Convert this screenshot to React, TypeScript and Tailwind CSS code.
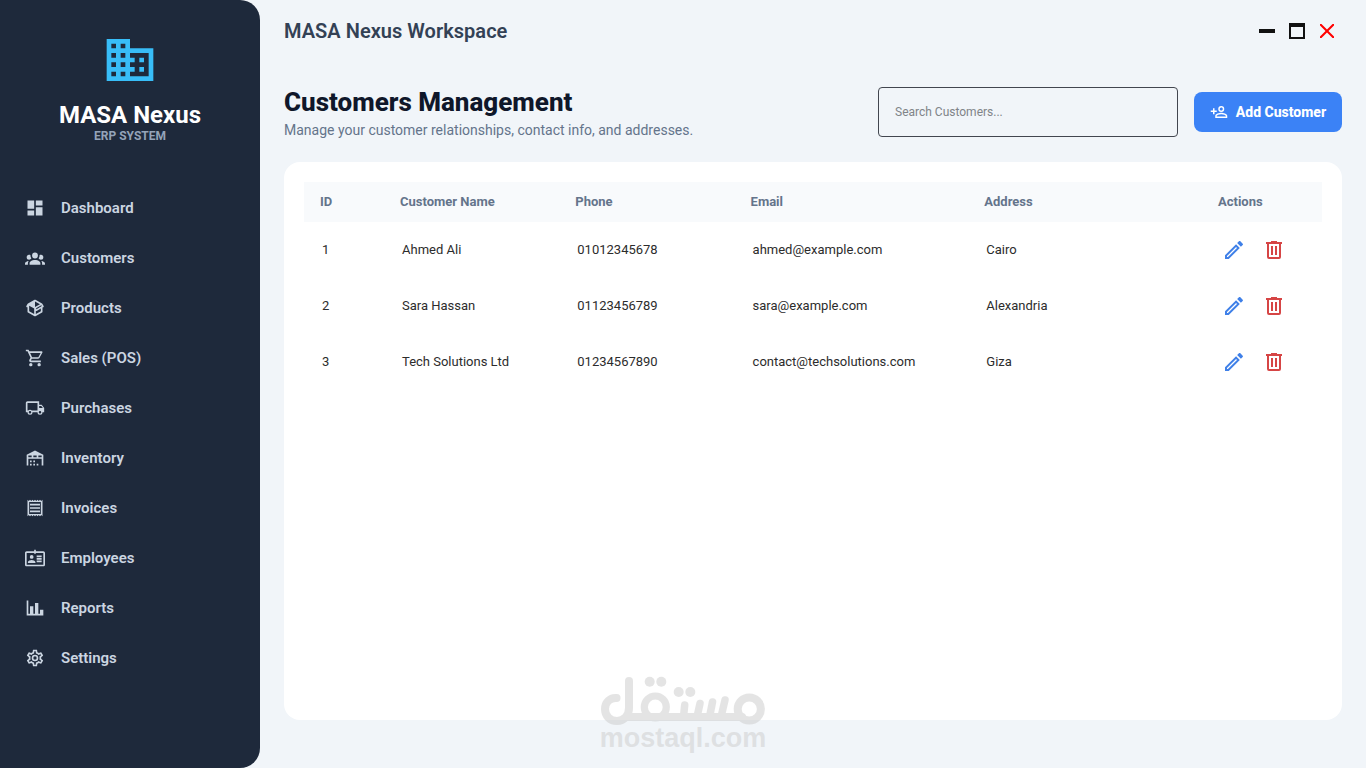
import React from 'react';

const icons = {
  domain: 'M18,15H16V17H18M18,11H16V13H18M20,19H12V17H14V15H12V13H14V11H12V9H20M10,7H8V5H10M10,11H8V9H10M10,15H8V13H10M10,19H8V17H10M6,7H4V5H6M6,11H4V9H6M6,15H4V13H6M6,19H4V17H6M12,7V3H2V21H22V7H12Z',
  dashboard: 'M13,3V9H21V3M13,21H21V11H13M3,21H11V15H3M3,13H11V3H3V13Z',
  group: 'M12,5.5A3.5,3.5 0 0,1 15.5,9A3.5,3.5 0 0,1 12,12.5A3.5,3.5 0 0,1 8.5,9A3.5,3.5 0 0,1 12,5.5M5,8C5.56,8 6.08,8.15 6.53,8.42C6.38,9.85 6.8,11.27 7.66,12.38C7.16,13.34 6.16,14 5,14A3,3 0 0,1 2,11A3,3 0 0,1 5,8M19,8A3,3 0 0,1 22,11A3,3 0 0,1 19,14C17.84,14 16.84,13.34 16.34,12.38C17.2,11.27 17.62,9.85 17.47,8.42C17.92,8.15 18.44,8 19,8M5.5,18.25C5.5,16.18 8.41,14.5 12,14.5C15.59,14.5 18.5,16.18 18.5,18.25V20H5.5V18.25M0,20V18.5C0,17.11 1.89,15.94 4.45,15.6C3.86,16.28 3.5,17.22 3.5,18.25V20H0M24,20H20.5V18.25C20.5,17.22 20.14,16.28 19.55,15.6C22.11,15.94 24,17.11 24,18.5V20Z',
  box: 'M2,10.96C1.5,10.68 1.35,10.07 1.63,9.59L3.13,7C3.24,6.8 3.41,6.66 3.6,6.58L11.43,2.18C11.59,2.06 11.79,2 12,2C12.21,2 12.41,2.06 12.57,2.18L20.47,6.62C20.66,6.72 20.82,6.88 20.91,7.08L22.36,9.6C22.64,10.08 22.47,10.69 22,10.96L21,11.54V16.5C21,16.88 20.79,17.21 20.47,17.38L12.57,21.82C12.41,21.94 12.21,22 12,22C11.79,22 11.59,21.94 11.43,21.82L3.53,17.38C3.21,17.21 3,16.88 3,16.5V10.96C2.7,11.13 2.32,11.14 2,10.96M12,4.15V4.15L12,10.85V10.85L17.96,7.5L12,4.15M5,15.91L11,19.29V12.58L5,9.21V15.91M19,15.91V12.69L14,15.59C13.67,15.77 13.3,15.76 13,15.6V19.29L19,15.91M13.85,13.36L20.13,9.73L19.55,8.72L13.27,12.35L13.85,13.36Z',
  cart: 'M17,18A2,2 0 0,1 19,20A2,2 0 0,1 17,22C15.89,22 15,21.1 15,20C15,18.89 15.89,18 17,18M1,2H4.27L5.21,4H20A1,1 0 0,1 21,5C21,5.17 20.95,5.34 20.88,5.5L17.3,11.97C16.96,12.58 16.3,13 15.55,13H8.1L7.2,14.63L7.17,14.75A0.25,0.25 0 0,0 7.42,15H19V17H7C5.89,17 5,16.1 5,15C5,14.65 5.09,14.32 5.24,14.04L6.6,11.59L3,4H1V2M7,18A2,2 0 0,1 9,20A2,2 0 0,1 7,22C5.89,22 5,21.1 5,20C5,18.89 5.89,18 7,18M16,11L18.78,6H6.14L8.5,11H16Z',
  truck: 'M18,18.5A1.5,1.5 0 0,0 19.5,17A1.5,1.5 0 0,0 18,15.5A1.5,1.5 0 0,0 16.5,17A1.5,1.5 0 0,0 18,18.5M19.5,9.5H17V12H21.46L19.5,9.5M6,18.5A1.5,1.5 0 0,0 7.5,17A1.5,1.5 0 0,0 6,15.5A1.5,1.5 0 0,0 4.5,17A1.5,1.5 0 0,0 6,18.5M20,8L23,12V17H21A3,3 0 0,1 18,20A3,3 0 0,1 15,17H9A3,3 0 0,1 6,20A3,3 0 0,1 3,17H1V6C1,4.89 1.89,4 3,4H17V8H20M3,6V15H3.76C4.31,14.39 5.11,14 6,14C6.89,14 7.69,14.39 8.24,15H15V6H3Z',
  warehouse: 'M6 19H8V21H6V19M12 3L2 8V21H4V13H20V21H22V8L12 3M8 11H4V9H8V11M14 11H10V9H14V11M20 11H16V9H20V11M6 15H8V17H6V15M10 15H12V17H10V15M10 19H12V21H10V19M14 19H16V21H14V19Z',
  receipt: 'M19.5 3.5L18 2l-1.5 1.5L15 2l-1.5 1.5L12 2l-1.5 1.5L9 2 7.5 3.5 6 2 4.5 3.5 3 2v20l1.5-1.5L6 22l1.5-1.5L9 22l1.5-1.5L12 22l1.5-1.5L15 22l1.5-1.5L18 22l1.5-1.5L21 22V2l-1.5 1.5zM19 19.09H5V4.91h14v14.18zM6 15h12v2H6zm0-4h12v2H6zm0-4h12v2H6z',
  badge: 'M22,4H13V2H11V4H2C0.9,4 0,4.9 0,6V20C0,21.1 0.9,22 2,22H22C23.1,22 24,21.1 24,20V6C24,4.9 23.1,4 22,4M22,20H2V6H11V7H13V6H22V20M14,9H20V11H14V9M14,12H20V14H14V12M14,15H20V17H14V15M8,13A2.25,2.25 0 0,0 10.25,10.75A2.25,2.25 0 0,0 8,8.5A2.25,2.25 0 0,0 5.75,10.75A2.25,2.25 0 0,0 8,13M12.5,16.9V18H3.5V16.9C3.5,15.4 6.5,14.4 8,14.4C9.5,14.4 12.5,15.4 12.5,16.9Z',
  chart: 'M22,21H2V3H4V19H6V10H10V19H12V6H16V19H18V14H22V21Z',
  cog: 'M12,8A4,4 0 0,1 16,12A4,4 0 0,1 12,16A4,4 0 0,1 8,12A4,4 0 0,1 12,8M12,10A2,2 0 0,0 10,12A2,2 0 0,0 12,14A2,2 0 0,0 14,12A2,2 0 0,0 12,10M10,22C9.75,22 9.54,21.82 9.5,21.58L9.13,18.93C8.5,18.68 7.96,18.34 7.44,17.94L4.95,18.95C4.73,19.03 4.46,18.95 4.34,18.73L2.34,15.27C2.21,15.05 2.27,14.78 2.46,14.63L4.57,12.97L4.5,12L4.57,11L2.46,9.37C2.27,9.22 2.21,8.95 2.34,8.73L4.34,5.27C4.46,5.05 4.73,4.96 4.95,5.05L7.44,6.05C7.96,5.66 8.5,5.32 9.13,5.07L9.5,2.42C9.54,2.18 9.75,2 10,2H14C14.25,2 14.46,2.18 14.5,2.42L14.87,5.07C15.5,5.32 16.04,5.66 16.56,6.05L19.05,5.05C19.27,4.96 19.54,5.05 19.66,5.27L21.66,8.73C21.79,8.95 21.73,9.22 21.54,9.37L19.43,11L19.5,12L19.43,13L21.54,14.63C21.73,14.78 21.79,15.05 21.66,15.27L19.66,18.73C19.54,18.95 19.27,19.04 19.05,18.95L16.56,17.95C16.04,18.34 15.5,18.68 14.87,18.93L14.5,21.58C14.46,21.82 14.25,22 14,22H10M11.25,4L10.88,6.61C9.68,6.86 8.62,7.5 7.85,8.39L5.44,7.35L4.69,8.65L6.8,10.2C6.4,11.37 6.4,12.64 6.8,13.8L4.68,15.36L5.43,16.66L7.86,15.62C8.63,16.5 9.68,17.14 10.87,17.38L11.24,20H12.76L13.13,17.39C14.32,17.14 15.37,16.5 16.14,15.62L18.57,16.66L19.32,15.36L17.2,13.81C17.6,12.64 17.6,11.37 17.2,10.2L19.31,8.65L18.56,7.35L16.15,8.39C15.38,7.5 14.32,6.86 13.12,6.62L12.75,4H11.25Z',
  addUser: 'M15,4A4,4 0 0,0 11,8A4,4 0 0,0 15,12A4,4 0 0,0 19,8A4,4 0 0,0 15,4M15,5.9C16.16,5.9 17.1,6.84 17.1,8C17.1,9.16 16.16,10.1 15,10.1A2.1,2.1 0 0,1 12.9,8A2.1,2.1 0 0,1 15,5.9M4,7V10H1V12H4V15H6V12H9V10H6V7H4M15,13C12.33,13 7,14.33 7,17V20H23V17C23,14.33 17.67,13 15,13M15,14.9C17.97,14.9 21.1,16.36 21.1,17V18.1H8.9V17C8.9,16.36 12,14.9 15,14.9Z',
  pencil: 'M14.06,9L15,9.94L5.92,19H5V18.08L14.06,9M17.66,3C17.41,3 17.15,3.1 16.96,3.29L15.13,5.12L18.88,8.87L20.71,7.04C21.1,6.65 21.1,6 20.71,5.63L18.37,3.29C18.17,3.09 17.92,3 17.66,3M14.06,6.19L3,17.25V21H6.75L17.81,9.94L14.06,6.19Z',
  trash: 'M9,3V4H4V6H5V19A2,2 0 0,0 7,21H17A2,2 0 0,0 19,19V6H20V4H15V3H9M7,6H17V19H7V6M9,8V17H11V8H9M13,8V17H15V8H13Z',
  minimize: 'M20,14H4V10H20',
  maximize: 'M4,4H20V20H4V4M6,8V18H18V8H6Z',
  close: 'M13.46,12L19,17.54V19H17.54L12,13.46L6.46,19H5V17.54L10.54,12L5,6.46V5H6.46L12,10.54L17.54,5H19V6.46L13.46,12Z',
};

type IconName = keyof typeof icons;

function Icon({ name, className }: { name: IconName; className: string }) {
  return (
    <svg viewBox="0 0 24 24" fill="currentColor" className={`shrink-0 ${className}`} aria-hidden="true">
      <path d={icons[name]} />
    </svg>
  );
}

const navItems: { label: string; icon: IconName }[] = [
  { label: 'Dashboard', icon: 'dashboard' },
  { label: 'Customers', icon: 'group' },
  { label: 'Products', icon: 'box' },
  { label: 'Sales (POS)', icon: 'cart' },
  { label: 'Purchases', icon: 'truck' },
  { label: 'Inventory', icon: 'warehouse' },
  { label: 'Invoices', icon: 'receipt' },
  { label: 'Employees', icon: 'badge' },
  { label: 'Reports', icon: 'chart' },
  { label: 'Settings', icon: 'cog' },
];

const customers = [
  { id: 1, name: 'Ahmed Ali', phone: '01012345678', email: 'ahmed@example.com', address: 'Cairo' },
  { id: 2, name: 'Sara Hassan', phone: '01123456789', email: 'sara@example.com', address: 'Alexandria' },
  { id: 3, name: 'Tech Solutions Ltd', phone: '01234567890', email: 'contact@techsolutions.com', address: 'Giza' },
];

function Sidebar() {
  return (
    <aside className="flex w-[260px] shrink-0 flex-col rounded-r-[20px] bg-[#1e293b]">
      <div className="flex flex-col items-center pt-8">
        <Icon name="domain" className="size-14 text-[#38bdf8]" />
        <div className="mt-[13px] text-2xl leading-[28px] font-bold text-white">MASA Nexus</div>
        <div className="text-xs leading-[14px] font-bold text-[#94a3b8]">ERP SYSTEM</div>
      </div>
      <nav className="mt-10 flex flex-col">
        {navItems.map((item) => (
          <a key={item.label} className="flex h-[50px] items-center gap-4 pl-[25px] text-[#cbd5e1]">
            <Icon name={item.icon} className="size-5" />
            <span className="text-[15px] font-semibold">{item.label}</span>
          </a>
        ))}
      </nav>
    </aside>
  );
}

function TitleBar() {
  return (
    <header className="flex h-[62px] items-center justify-between pr-[3px]">
      <div className="text-xl font-semibold tracking-[0.03px] text-[#334155]">MASA Nexus Workspace</div>
      <div className="flex gap-1.5 text-[#111]">
        <Icon name="minimize" className="size-6" />
        <Icon name="maximize" className="size-6" />
        <Icon name="close" className="size-6 text-[#ff0000]" />
      </div>
    </header>
  );
}

function Watermark() {
  return (
    <div className="pointer-events-none absolute top-[676px] left-[600px] flex w-[166px] flex-col items-center text-[#cbcbcb]/50">
      <svg viewBox="0 0 166 50" className="h-[50px] w-[166px]" role="img" aria-label="مستقل">
        <g opacity="0.5">
          <g fill="none" stroke="#cbcbcb" strokeWidth="8" strokeLinecap="round" strokeLinejoin="round">
            <path d="M16.5 22C9.500 21.500 5 27 5 33C5 40 10 45 17 45C24 45 29 39.500 29 32V5" />
            <path d="M27 41H142" />
            <circle cx="55.300" cy="31" r="11" strokeWidth="7.200" />
            <path d="M84.700 29L83.500 41M100 27.500L97 41M112.500 26L109.500 41M125 24L121 41" strokeWidth="7.500" />
            <circle cx="149.300" cy="33" r="11.600" />
          </g>
          <g fill="#cbcbcb">
            <circle cx="49.700" cy="5.700" r="5" />
            <circle cx="61.300" cy="5.700" r="5" />
            <circle cx="78.700" cy="16" r="5" />
            <circle cx="90.300" cy="16" r="5" />
          </g>
        </g>
      </svg>
      <div className="-mt-0.5 font-['Liberation_Sans',sans-serif] text-[27px] leading-[28px] font-bold">mostaql.com</div>
    </div>
  );
}

const gridCols = 'grid grid-cols-[80px_175.3px_175.3px_233.700px_233.700px_1fr] pl-4';

export default function App() {
  return (
    <div className="relative flex h-screen w-screen overflow-hidden bg-[#f1f5f9] font-['Roboto',sans-serif]">
      <Sidebar />
      <main className="flex min-w-0 flex-1 flex-col px-6 pb-12">
        <TitleBar />
        <section className="flex h-[100px] items-center justify-between">
          <div className="pt-0.5">
            <h1 className="text-[26px] leading-[31px] font-extrabold text-[#0f172a]">Customers Management</h1>
            <p className="mt-1 text-sm leading-[17px] text-[#64748b]">
              Manage your customer relationships, contact info, and addresses.
            </p>
          </div>
          <div className="flex items-center gap-4">
            <input
              className="h-[50px] w-[300px] rounded border border-[#42464f] px-4 text-xs placeholder:text-[#808488]"
              placeholder="Search Customers..."
            />
            <button className="flex h-10 w-[148px] items-center justify-center gap-2 rounded-lg bg-[#3b82f6] text-sm font-extrabold text-white">
              <Icon name="addUser" className="size-[18px]" />
              Add Customer
            </button>
          </div>
        </section>
        <section className="flex-1 rounded-2xl bg-white p-5">
          <div className={`${gridCols} h-10 items-center bg-[#f8fafc] text-[13px] font-bold text-[#64748b]`}>
            <span>ID</span>
            <span>Customer Name</span>
            <span>Phone</span>
            <span>Email</span>
            <span>Address</span>
            <span>Actions</span>
          </div>
          {customers.map((c) => (
            <div key={c.id} className={`${gridCols} h-14 items-center text-[13px] text-[#2c2c2c]`}>
              <span className="pl-0.5">{c.id}</span>
              <span className="pl-0.5">{c.name}</span>
              <span className="pl-0.5">{c.phone}</span>
              <span className="pl-0.5">{c.email}</span>
              <span className="pl-0.5">{c.address}</span>
              <span className="flex gap-4 pl-1">
                <Icon name="pencil" className="size-6 text-[#3f80e8]" />
                <Icon name="trash" className="size-6 text-[#d64545]" />
              </span>
            </div>
          ))}
        </section>
      </main>
      <Watermark />
    </div>
  );
}
